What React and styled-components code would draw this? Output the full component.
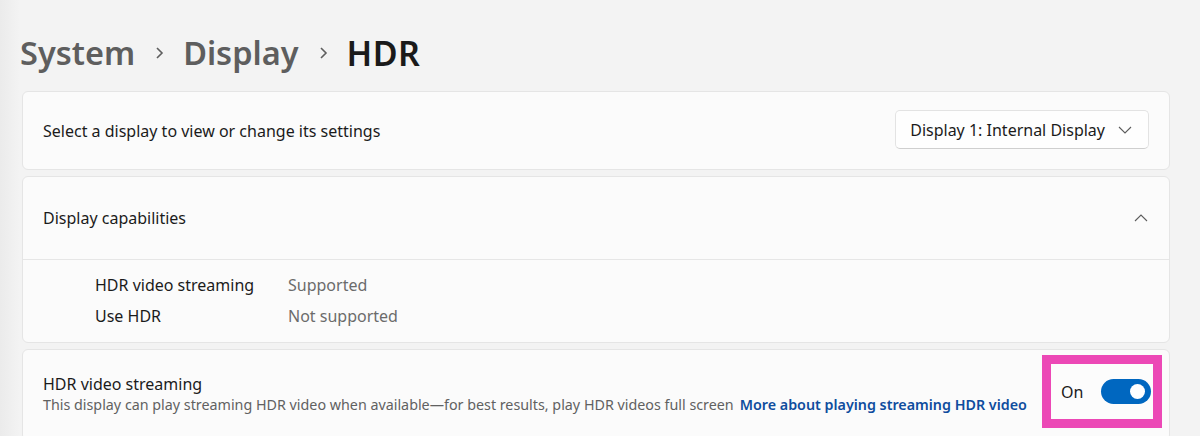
import React from 'react';
import styled, { createGlobalStyle } from 'styled-components';

const GlobalStyle = createGlobalStyle`
  html, body {
    margin: 0;
    padding: 0;
    background: #f3f3f3;
    font-family: "Segoe UI", "Noto Sans", "Open Sans", sans-serif;
    color: #1b1b1b;
  }
`

const Page = styled.div`
  width: 1200px;
  height: 436px;
  overflow: hidden;
  background: linear-gradient(to right, #ebebeb 0px, #f3f3f3 20px);
  padding-left: 22px;
  padding-right: 30px;
  box-sizing: border-box;
`

const Breadcrumb = styled.div`
  display: flex;
  align-items: center;
  height: 91px;
  margin-left: -2px;
  padding-top: 14px;
  box-sizing: border-box;
  font-size: 32.5px;
  font-weight: 600;
`

const Crumb = styled.span`
  color: ${(props) => (props.current ? '#1a1a1a' : '#5e5e5e')};
  font-size: ${(props) => (props.current ? '34px' : 'inherit')};
  letter-spacing: ${(props) => (props.current ? '0.5px' : '0')};
`

const Sep = styled.span`
  display: flex;
  align-items: center;
  margin: 0 19px 0 20px;
  color: #5e5e5e;
`

const Stack = styled.div`
  display: flex;
  flex-direction: column;
  gap: 6px;
`

const Card = styled.div`
  background: #fbfbfb;
  border: 1px solid #e5e5e5;
  border-radius: 6px;
`

const Row = styled.div`
  display: flex;
  align-items: center;
  justify-content: space-between;
  height: ${(props) => props.h}px;
  padding: 0 20px 0 20px;
  box-sizing: border-box;
  border-bottom: ${(props) => (props.divider ? '1px solid #e6e6e6' : 'none')};
`

const TopRow = styled.div`
  display: flex;
  align-items: flex-start;
  justify-content: space-between;
  height: ${(props) => props.h}px;
  padding: 0 20px;
  box-sizing: border-box;
`

const Label = styled.div`
  font-size: 16px;
  color: #1b1b1b;
`

const Dropdown = styled.div`
  display: flex;
  align-items: center;
  gap: 10px;
  height: 39px;
  margin-top: -2px;
  padding: 0 13px 0 14px;
  box-sizing: border-box;
  background: #fefefe;
  border: 1px solid #e3e3e3;
  border-bottom-color: #cfcfcf;
  border-radius: 5px;
  font-size: 16px;
  color: #1b1b1b;
`

const IconBox = styled.span`
  display: flex;
  align-items: center;
  justify-content: center;
  width: 20px;
  height: 20px;
  margin-right: ${(props) => props.mr || 0}px;
`

const Details = styled.div`
  display: grid;
  grid-template-columns: 193px auto;
  row-gap: 9px;
  padding: 14px 0 15px 72px;
  font-size: 16px;
`

const Key = styled.div`
  color: #1b1b1b;
`

const Value = styled.div`
  color: #6b6b6b;
`

const TextCol = styled.div`
  display: flex;
  flex-direction: column;
  gap: 0;
  padding-top: 23px;
`

const Desc = styled.div`
  font-size: 14.3px;
  color: #616161;
  white-space: nowrap;
`

const Link = styled.a`
  margin-left: 6px;
  color: #0f4d9e;
  font-weight: 600;
  text-decoration: none;
`

const Highlight = styled.div`
  display: flex;
  align-items: center;
  gap: 18px;
  width: 120px;
  height: 73px;
  margin-right: -13px;
  margin-top: 5px;
  padding-left: 10px;
  box-sizing: border-box;
  border: 9px solid #ec48b6;
  background: #fcfcfc;
  font-size: 16px;
`

const Toggle = styled.div`
  position: relative;
  width: 50px;
  height: 25px;
  border-radius: 13px;
  background: #0067c0;
  flex-shrink: 0;
`

const Knob = styled.div`
  position: absolute;
  right: 6px;
  top: 5px;
  width: 15px;
  height: 15px;
  border-radius: 50%;
  background: #ffffff;
`

const Chevron = ({ up }) => (
  <svg width="14" height="8" viewBox="0 0 14 8">
    <path
      d={up ? 'M1 7 L7 1 L13 7' : 'M1 1 L7 7 L13 1'}
      fill="none"
      stroke="#5c5c5c"
      strokeWidth="1.1"
    />
  </svg>
)

const CrumbChevron = () => (
  <svg width="9" height="14" viewBox="0 0 9 14">
    <path d="M2 2 L7 7 L2 12" fill="none" stroke="#5e5e5e" strokeWidth="1.6" />
  </svg>
)

const App = () => {
  return (
    <Page>
      <GlobalStyle />
      <Breadcrumb>
        <Crumb>System</Crumb>
        <Sep><CrumbChevron /></Sep>
        <Crumb>Display</Crumb>
        <Sep><CrumbChevron /></Sep>
        <Crumb current>HDR</Crumb>
      </Breadcrumb>
      <Stack>
        <Card>
          <Row h={77}>
            <Label>Select a display to view or change its settings</Label>
            <Dropdown>
              Display 1: Internal Display
              <IconBox><Chevron /></IconBox>
            </Dropdown>
          </Row>
        </Card>
        <Card>
          <Row h={83} divider>
            <Label>Display capabilities</Label>
            <IconBox mr={-2}><Chevron up /></IconBox>
          </Row>
          <Details>
            <Key>HDR video streaming</Key>
            <Value>Supported</Value>
            <Key>Use HDR</Key>
            <Value>Not supported</Value>
          </Details>
        </Card>
        <Card>
          <TopRow h={90}>
            <TextCol>
              <Label>HDR video streaming</Label>
              <Desc>
                This display can play streaming HDR video when available—for best results, play HDR videos full screen
                <Link href="#">More about playing streaming HDR video</Link>
              </Desc>
            </TextCol>
            <Highlight>
              On
              <Toggle><Knob /></Toggle>
            </Highlight>
          </TopRow>
        </Card>
      </Stack>
    </Page>
  );
};

export default App;
